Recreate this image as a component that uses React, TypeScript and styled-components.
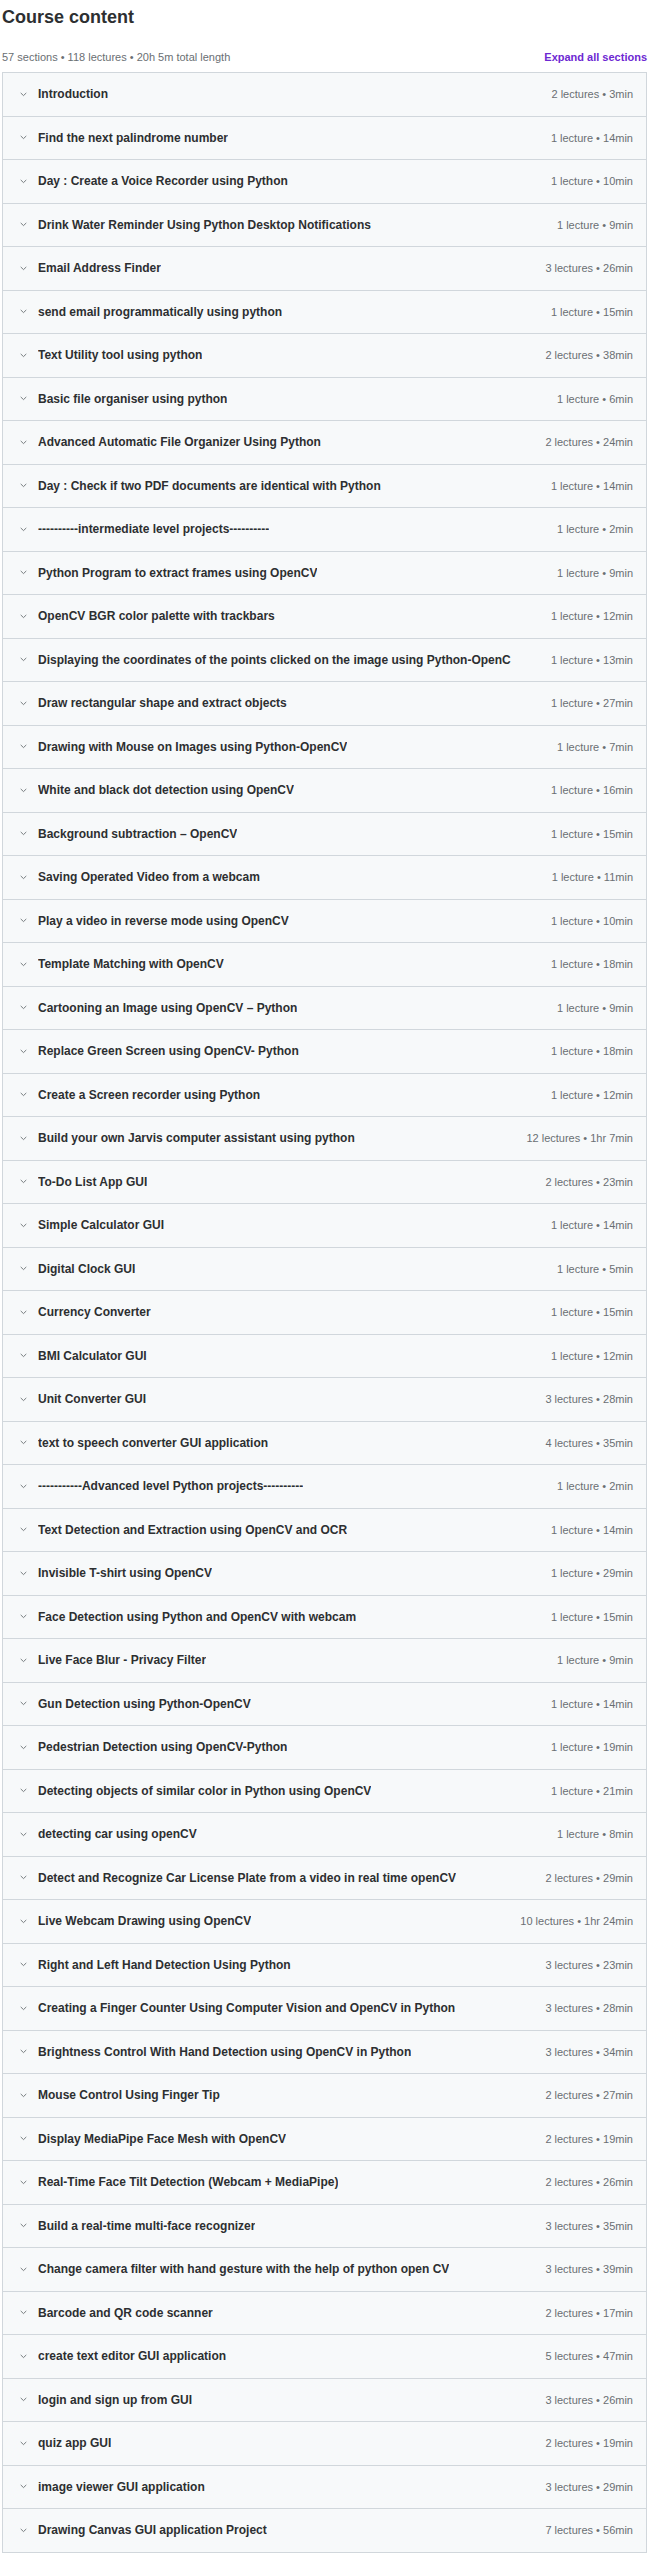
import React from "react";
import styled, { createGlobalStyle } from "styled-components";

const GlobalStyle = createGlobalStyle`
  html, body {
    margin: 0;
    padding: 0;
    background: #ffffff;
  }
  body {
    font-family: "Liberation Sans", Arial, sans-serif;
    color: #2d2f31;
  }
  * { box-sizing: border-box; }
`;

type Section = { title: string; lectures: number; length: string };

const sections: Section[] = [
  { title: "Introduction", lectures: 2, length: "3min" },
  { title: "Find the next palindrome number", lectures: 1, length: "14min" },
  { title: "Day : Create a Voice Recorder using Python", lectures: 1, length: "10min" },
  { title: "Drink Water Reminder Using Python Desktop Notifications", lectures: 1, length: "9min" },
  { title: "Email Address Finder", lectures: 3, length: "26min" },
  { title: "send email programmatically using python", lectures: 1, length: "15min" },
  { title: "Text Utility tool using python", lectures: 2, length: "38min" },
  { title: "Basic file organiser using python", lectures: 1, length: "6min" },
  { title: "Advanced Automatic File Organizer Using Python", lectures: 2, length: "24min" },
  { title: "Day : Check if two PDF documents are identical with Python", lectures: 1, length: "14min" },
  { title: "----------intermediate level projects----------", lectures: 1, length: "2min" },
  { title: "Python Program to extract frames using OpenCV", lectures: 1, length: "9min" },
  { title: "OpenCV BGR color palette with trackbars", lectures: 1, length: "12min" },
  { title: "Displaying the coordinates of the points clicked on the image using Python-OpenC", lectures: 1, length: "13min" },
  { title: "Draw rectangular shape and extract objects", lectures: 1, length: "27min" },
  { title: "Drawing with Mouse on Images using Python-OpenCV", lectures: 1, length: "7min" },
  { title: "White and black dot detection using OpenCV", lectures: 1, length: "16min" },
  { title: "Background subtraction \u2013 OpenCV", lectures: 1, length: "15min" },
  { title: "Saving Operated Video from a webcam", lectures: 1, length: "11min" },
  { title: "Play a video in reverse mode using OpenCV", lectures: 1, length: "10min" },
  { title: "Template Matching with OpenCV", lectures: 1, length: "18min" },
  { title: "Cartooning an Image using OpenCV \u2013 Python", lectures: 1, length: "9min" },
  { title: "Replace Green Screen using OpenCV- Python", lectures: 1, length: "18min" },
  { title: "Create a Screen recorder using Python", lectures: 1, length: "12min" },
  { title: "Build your own Jarvis computer assistant using python", lectures: 12, length: "1hr 7min" },
  { title: "To-Do List App GUI", lectures: 2, length: "23min" },
  { title: "Simple Calculator GUI", lectures: 1, length: "14min" },
  { title: "Digital Clock GUI", lectures: 1, length: "5min" },
  { title: "Currency Converter", lectures: 1, length: "15min" },
  { title: "BMI Calculator GUI", lectures: 1, length: "12min" },
  { title: "Unit Converter GUI", lectures: 3, length: "28min" },
  { title: "text to speech converter GUI application", lectures: 4, length: "35min" },
  { title: "-----------Advanced level Python projects----------", lectures: 1, length: "2min" },
  { title: "Text Detection and Extraction using OpenCV and OCR", lectures: 1, length: "14min" },
  { title: "Invisible T-shirt using OpenCV", lectures: 1, length: "29min" },
  { title: "Face Detection using Python and OpenCV with webcam", lectures: 1, length: "15min" },
  { title: "Live Face Blur - Privacy Filter", lectures: 1, length: "9min" },
  { title: "Gun Detection using Python-OpenCV", lectures: 1, length: "14min" },
  { title: "Pedestrian Detection using OpenCV-Python", lectures: 1, length: "19min" },
  { title: "Detecting objects of similar color in Python using OpenCV", lectures: 1, length: "21min" },
  { title: "detecting car using openCV", lectures: 1, length: "8min" },
  { title: "Detect and Recognize Car License Plate from a video in real time openCV", lectures: 2, length: "29min" },
  { title: "Live Webcam Drawing using OpenCV", lectures: 10, length: "1hr 24min" },
  { title: "Right and Left Hand Detection Using Python", lectures: 3, length: "23min" },
  { title: "Creating a Finger Counter Using Computer Vision and OpenCV in Python", lectures: 3, length: "28min" },
  { title: "Brightness Control With Hand Detection using OpenCV in Python", lectures: 3, length: "34min" },
  { title: "Mouse Control Using Finger Tip", lectures: 2, length: "27min" },
  { title: "Display MediaPipe Face Mesh with OpenCV", lectures: 2, length: "19min" },
  { title: "Real-Time Face Tilt Detection (Webcam + MediaPipe)", lectures: 2, length: "26min" },
  { title: "Build a real-time multi-face recognizer", lectures: 3, length: "35min" },
  { title: "Change camera filter with hand gesture with the help of python open CV", lectures: 3, length: "39min" },
  { title: "Barcode and QR code scanner", lectures: 2, length: "17min" },
  { title: "create text editor GUI application", lectures: 5, length: "47min" },
  { title: "login and sign up from GUI", lectures: 3, length: "26min" },
  { title: "quiz app GUI", lectures: 2, length: "19min" },
  { title: "image viewer GUI application", lectures: 3, length: "29min" },
  { title: "Drawing Canvas GUI application Project", lectures: 7, length: "56min" },
];

const Page = styled.div`
  padding: 0 4px 0 2px;
  width: 651px;
`;

const Heading = styled.h2`
  margin: 0;
  padding-top: 4px;
  font-size: 18px;
  line-height: 26px;
  font-weight: 700;
  color: #2d2f31;
`;

const SummaryBar = styled.div`
  margin-top: 19px;
  margin-bottom: 7px;
  display: flex;
  justify-content: space-between;
  align-items: baseline;
  font-size: 11px;
  line-height: 16px;
`;

const Summary = styled.span`
  color: #6a6f73;
`;

const ExpandLink = styled.button`
  border: 0;
  padding: 0;
  background: none;
  font-family: inherit;
  font-size: 11px;
  line-height: 16px;
  font-weight: 700;
  color: #6d28d2;
  cursor: pointer;
`;

const SectionList = styled.div`
  border: 1px solid #d1d7dc;
  display: flex;
  flex-direction: column;
`;

const SectionRow = styled.div`
  height: 43.5px;
  display: flex;
  align-items: center;
  padding: 0 13px 0 17px;
  background: #f7f9fa;
  border-bottom: 1px solid #d1d7dc;

  &:last-child {
    height: 42.5px;
    border-bottom: 0;
  }
`;

const Chevron = styled.svg`
  flex: none;
  width: 7px;
  height: 7px;
  margin-right: 11px;
  color: #6a6f73;
`;

const SectionTitle = styled.span`
  flex: 0 1 auto;
  max-width: 476px;
  overflow: hidden;
  white-space: nowrap;
  font-size: 12px;
  font-weight: 700;
  color: #2d2f31;
`;

const SectionMeta = styled.span`
  margin-left: auto;
  padding-left: 16px;
  flex: none;
  white-space: nowrap;
  font-size: 11px;
  color: #6a6f73;
`;

const ChevronDown = () => (
  <Chevron viewBox="0 0 7 7" aria-hidden="true">
    <polyline
      points="1,2.2 3.5,4.6 6,2.2"
      fill="none"
      stroke="currentColor"
      strokeWidth="0.9"
      strokeLinecap="round"
      strokeLinejoin="round"
    />
  </Chevron>
);

const metaText = (s: Section) =>
  `${s.lectures} ${s.lectures === 1 ? "lecture" : "lectures"} \u2022 ${s.length}`;

export default function App() {
  return (
    <>
      <GlobalStyle />
      <Page>
        <Heading>Course content</Heading>
        <SummaryBar>
          <Summary>57 sections • 118 lectures • 20h 5m total length</Summary>
          <ExpandLink type="button">Expand all sections</ExpandLink>
        </SummaryBar>
        <SectionList>
          {sections.map((s, i) => (
            <SectionRow key={i}>
              <ChevronDown />
              <SectionTitle>{s.title}</SectionTitle>
              <SectionMeta>{metaText(s)}</SectionMeta>
            </SectionRow>
          ))}
        </SectionList>
      </Page>
    </>
  );
}
